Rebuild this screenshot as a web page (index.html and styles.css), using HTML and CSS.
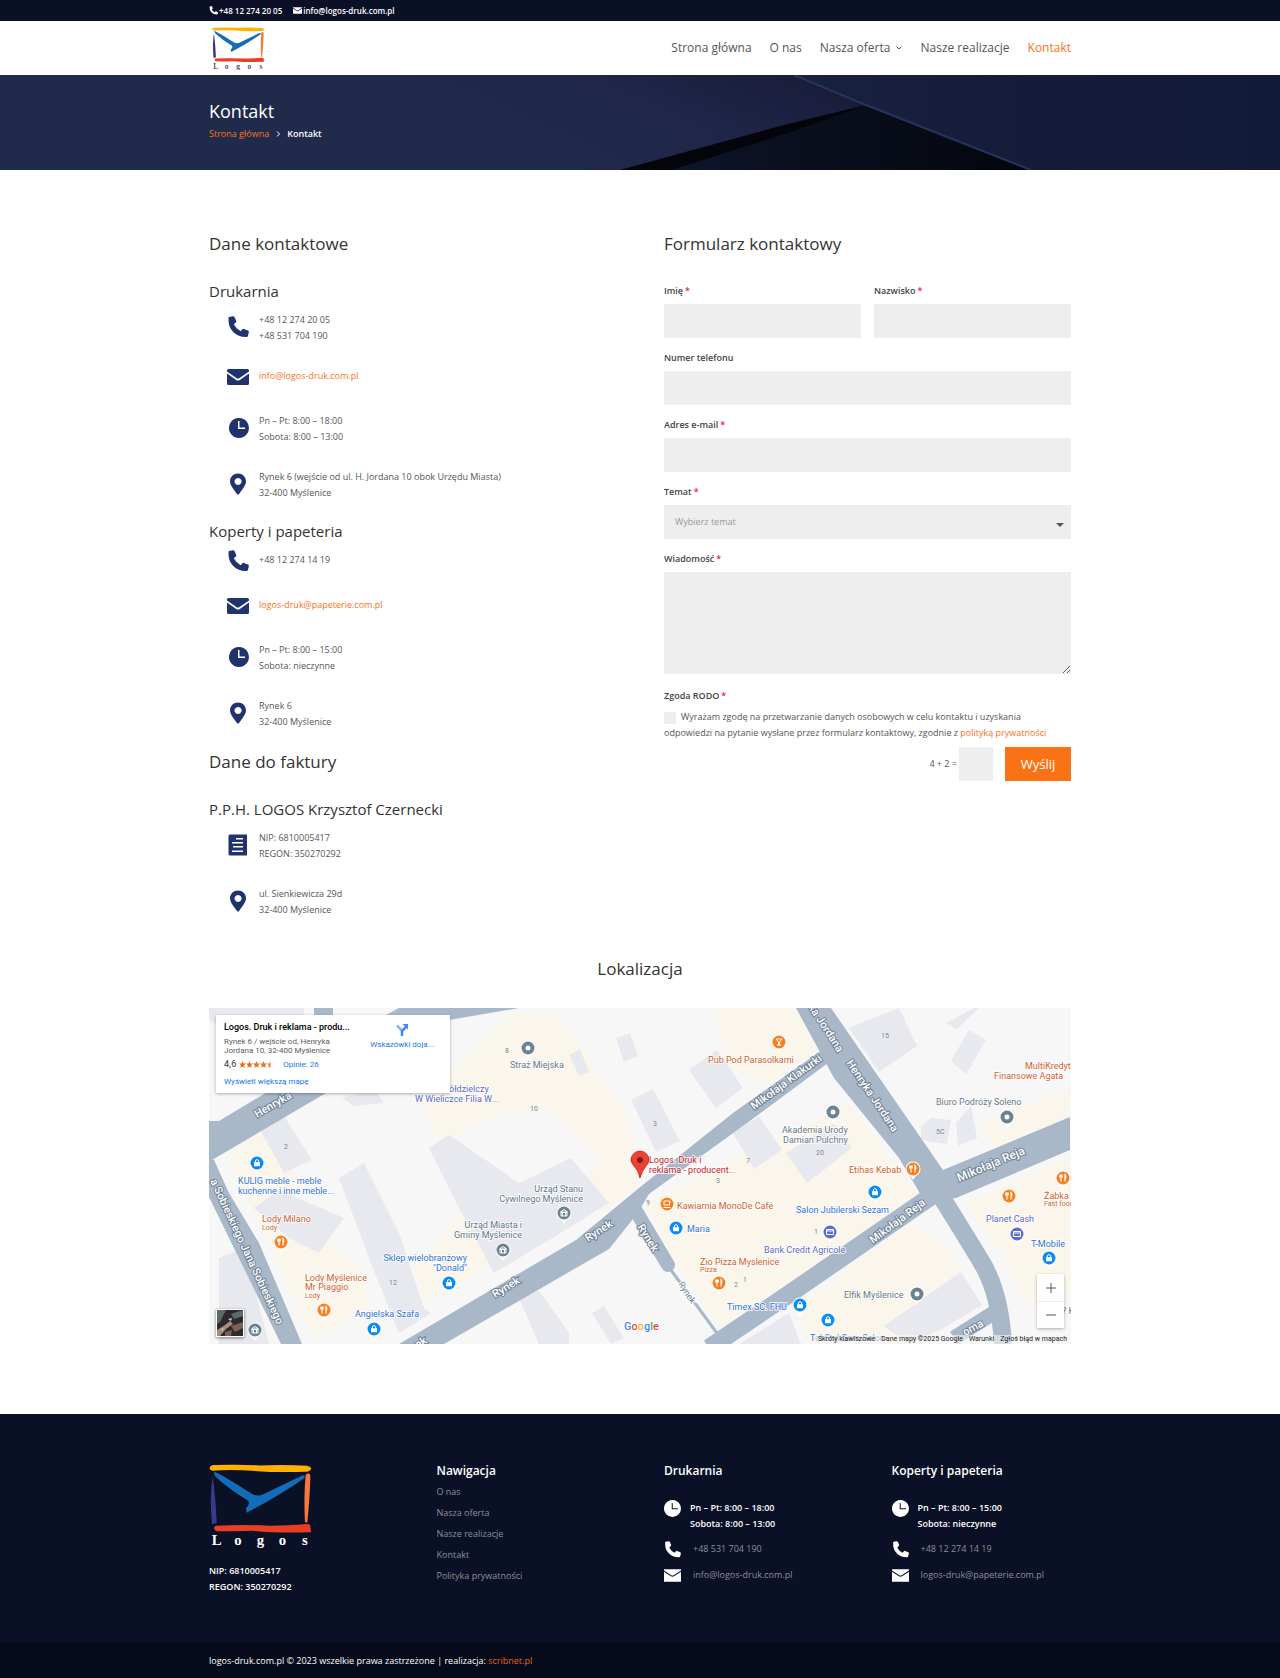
FILE: index.html
```html
<!DOCTYPE html>
<html lang="pl">
<head>
<meta charset="utf-8">
<meta name="viewport" content="width=device-width, initial-scale=1">
<title>Kontakt – Logos</title>
<link rel="stylesheet" href="styles.css">
</head>
<body>
<svg class="defs" aria-hidden="true">
  <symbol id="i-phone" viewBox="0 0 22 22"><path d="M1.500 2.200Q1 1.200 2.200 1L5.800.2Q7 0 7.500 1L9.200 5Q9.500 6 8.800 6.600L6.800 8.300Q9 12.900 13.700 15.200L15.400 13.200Q16 12.500 17 12.900L21 14.600Q22 15 21.800 16.200L21 19.800Q20.700 21 19.600 21Q11.500 21.300 6.200 16Q1 10.800 1.500 2.200Z"/></symbol>
  <symbol id="i-mail" viewBox="0 0 22 22"><path d="M1.500 3H20.500Q22 3 22 4.500V5.500L12.200 12.300Q11 13.100 9.800 12.300L0 5.500V4.500Q0 3 1.500 3ZM0 7.500L9.200 14Q11 15.200 12.800 14L22 7.500V17.500Q22 19 20.500 19H1.500Q0 19 0 17.500Z"/></symbol>
  <symbol id="i-clock" viewBox="0 0 22 22"><path fill-rule="evenodd" d="M12 1A10 10 0 1 1 11.900 1ZM11 4V12H18V10.500H12.500V4Z"/></symbol>
  <symbol id="i-clock-lg" viewBox="0 0 22 22"><path fill-rule="evenodd" d="M11 0A11 11 0 1 1 10.900 0ZM10 4V12H18V10.700H11.300V4Z"/></symbol>
  <symbol id="i-pin" viewBox="0 0 22 22"><path fill-rule="evenodd" d="M11 .5C15.500.5 19 4 19 8.500C19 12 15 17 12 21Q11 22.300 10 21C7 17 3 12 3 8.500C3 4 6.500.5 11 .5ZM11 5A3.500 3.500 0 1 0 11.100 5Z"/></symbol>
  <symbol id="i-list" viewBox="0 0 22 22"><path fill-rule="evenodd" d="M3 .5H20V21.500H3Q1.500 21.500 1.500 20V2Q1.500.5 3 .5ZM9 4V5.500H16V4ZM5 8V9.500H16V8ZM6 12V13.500H16V12ZM5 16.500V18H16V16.500Z"/></symbol>
  <symbol id="i-envelope" viewBox="0 0 22 22"><path d="M0 3H22V4.500L13 10.500Q11 11.800 9 10.500L0 4.500ZM0 6L9 12Q11 13.200 13 12L22 6V19H0Z"/></symbol>
  <symbol id="logo" viewBox="0 0 304 250">
    <path fill="#ffb000" d="M2 14Q1 4 16 3Q90 0 150 4Q230 1 292 5Q306 8 304 15Q302 22 290 23Q200 26 130 20Q60 16 10 20Q3 19 2 14Z"/>
    <path fill="#373a8f" d="M11 36Q19 90 23 176L9 180Q1 100 11 36Z"/>
    <path fill="#f6783b" d="M288 32Q296 24 302 32Q302 80 293 175L286 173Q282 100 288 32Z"/>
    <path fill="#e93e24" d="M20 184Q100 179 180 184Q240 184 290 179Q303 178 302 186L304 203Q200 206 130 199Q60 201 22 200Q9 191 20 184Z"/>
    <path fill="#136cb8" d="M14 22Q30 26 130 90Q145 97 160 91Q220 62 278 34Q288 32 284 42Q200 100 112 145L110 131Q123 120 117 109Q60 75 18 36Z"/>
    <text class="logo-word" x="8 75 142 208 277" y="242">Logos</text>
  </symbol>
  <symbol id="m-shop" viewBox="0 0 20 20"><path d="M10 19L6 13H14Z" fill="#fff"/><circle cx="10" cy="8" r="7.500" fill="#fff"/><circle cx="10" cy="8" r="6.500" fill="#0a8bf5"/><path d="M7 7.200H13V11.200H7Z" fill="#fff"/><path d="M8.400 7.500V6Q8.400 4.700 10 4.700Q11.600 4.700 11.600 6V7.500" fill="none" stroke="#fff"/></symbol>
  <symbol id="m-food" viewBox="0 0 20 20"><path d="M10 19L6 13H14Z" fill="#fff"/><circle cx="10" cy="8" r="7.500" fill="#fff"/><circle cx="10" cy="8" r="6.500" fill="#f97f1d"/><path d="M8 4.500V11.500M6.800 4.500V7H9.200V4.500M12 11.500V4.500Q13.500 6 12.500 8.500" fill="none" stroke="#fff" stroke-width="1.200"/></symbol>
  <symbol id="m-bar" viewBox="0 0 20 20"><path d="M10 19L6 13H14Z" fill="#fff"/><circle cx="10" cy="8" r="7.500" fill="#fff"/><circle cx="10" cy="8" r="6.500" fill="#f97f1d"/><path d="M7 5H13L10.500 8V11H9.500V8ZM8 11H12" fill="none" stroke="#fff"/></symbol>
  <symbol id="m-cafe" viewBox="0 0 20 20"><path d="M10 19L6 13H14Z" fill="#fff"/><circle cx="10" cy="8" r="7.500" fill="#fff"/><circle cx="10" cy="8" r="6.500" fill="#f97f1d"/><path d="M7 5H12.500V9H7ZM12.500 6H14M6.500 11.500H13.500" fill="none" stroke="#fff"/></symbol>
  <symbol id="m-civic" viewBox="0 0 20 20"><path d="M10 19L6 13H14Z" fill="#fff"/><circle cx="10" cy="8" r="7.500" fill="#fff"/><circle cx="10" cy="8" r="6.500" fill="#6b8390"/><path d="M6.500 7L10 4.500L13.500 7ZM7 7.500H13V11H7ZM8.500 8V11M11.500 8V11" fill="none" stroke="#fff"/></symbol>
  <symbol id="m-dot" viewBox="0 0 20 20"><path d="M10 19L6 13H14Z" fill="#fff"/><circle cx="10" cy="8" r="7.500" fill="#fff"/><circle cx="10" cy="8" r="6.500" fill="#6b8390"/><circle cx="10" cy="8" r="2.500" fill="#fff"/></symbol>
  <symbol id="m-bank" viewBox="0 0 20 20"><path d="M10 19L6 13H14Z" fill="#fff"/><circle cx="10" cy="8" r="7.500" fill="#fff"/><circle cx="10" cy="8" r="6.500" fill="#5b6bd0"/><path d="M6.500 5.500H13.500V10.500H6.500ZM6.500 7H13.500" fill="none" stroke="#fff"/></symbol>
</svg>

<div class="topbar">
  <div class="container topbar-row">
    <span class="topbar-item"><svg class="icon-xs"><use href="#i-phone"/></svg>+48 12 274 20 05</span>
    <a class="topbar-item" href="mailto:info@logos-druk.com.pl"><svg class="icon-xs"><use href="#i-envelope"/></svg>info@logos-druk.com.pl</a>
  </div>
</div>

<header class="header">
  <div class="container header-row">
    <a class="header-logo" href="#" aria-label="Logos"><svg><use href="#logo"/></svg></a>
    <nav class="nav">
      <a href="#">Strona główna</a>
      <a href="#">O nas</a>
      <a href="#">Nasza oferta<svg class="chevron" viewBox="0 0 6 6"><path d="M.5 1.500L3 4L5.500 1.500"/></svg></a>
      <a href="#">Nasze realizacje</a>
      <a class="active" href="#">Kontakt</a>
    </nav>
  </div>
</header>

<section class="hero">
  <svg class="hero-bg" viewBox="0 0 1280 95" preserveAspectRatio="none" aria-hidden="true">
    <defs>
      <linearGradient id="h1" gradientUnits="userSpaceOnUse" x1="560" y1="95" x2="660" y2="-125"><stop offset="0" stop-color="#202a4a"/><stop offset=".4" stop-color="#1f2648"/><stop offset=".7" stop-color="#1b1e3d"/><stop offset="1" stop-color="#131728"/></linearGradient>
      <linearGradient id="h2"><stop offset="0" stop-color="#18223f"/><stop offset=".5" stop-color="#151b38"/><stop offset="1" stop-color="#111b38"/></linearGradient>
      <linearGradient id="h3"><stop offset="0" stop-color="#101731"/><stop offset=".5" stop-color="#090e1c"/><stop offset="1" stop-color="#04060c"/></linearGradient>
    </defs>
    <path fill="url(#h1)" d="M0 0H880V95H0Z"/>
    <path fill="url(#h3)" d="M866 30L1033 95H620Z"/>
    <path fill="#03050b" d="M866 30L780 51L620 95H672L800 54Z"/>
    <path fill="url(#h2)" d="M792 0H1280V95H1033L866 30Z"/>
    <path fill="none" stroke="#26345c" stroke-width="2" d="M794 0L866 30L1031 95"/>
  </svg>
  <div class="container hero-text">
    <h1>Kontakt</h1>
    <p class="crumbs"><a href="#">Strona główna</a><svg class="crumb-sep" viewBox="0 0 6 6"><path d="M2 .5L4.500 3L2 5.500"/></svg><span>Kontakt</span></p>
  </div>
</section>

<main class="container main">
  <div class="columns">
    <section>
      <h2>Dane kontaktowe</h2>
      <h3>Drukarnia</h3>
      <ul class="contacts">
        <li><svg><use href="#i-phone"/></svg><p>+48 12 274 20 05<br>+48 531 704 190</p></li>
        <li><svg><use href="#i-mail"/></svg><p><a href="mailto:info@logos-druk.com.pl">info@logos-druk.com.pl</a></p></li>
        <li><svg><use href="#i-clock"/></svg><p>Pn – Pt: 8:00 – 18:00<br>Sobota: 8:00 – 13:00</p></li>
        <li><svg><use href="#i-pin"/></svg><p>Rynek 6 (wejście od ul. H. Jordana 10 obok Urzędu Miasta)<br>32-400 Myślenice</p></li>
      </ul>
      <h3>Koperty i papeteria</h3>
      <ul class="contacts">
        <li><svg><use href="#i-phone"/></svg><p>+48 12 274 14 19</p></li>
        <li><svg><use href="#i-mail"/></svg><p><a href="mailto:logos-druk@papeterie.com.pl">logos-druk@papeterie.com.pl</a></p></li>
        <li><svg><use href="#i-clock"/></svg><p>Pn – Pt: 8:00 – 15:00<br>Sobota: nieczynne</p></li>
        <li><svg><use href="#i-pin"/></svg><p>Rynek 6<br>32-400 Myślenice</p></li>
      </ul>
      <h2>Dane do faktury</h2>
      <h3>P.P.H. LOGOS Krzysztof Czernecki</h3>
      <ul class="contacts">
        <li><svg><use href="#i-list"/></svg><p>NIP: 6810005417<br>REGON: 350270292</p></li>
        <li><svg><use href="#i-pin"/></svg><p>ul. Sienkiewicza 29d<br>32-400 Myślenice</p></li>
      </ul>
    </section>

    <section>
      <h2>Formularz kontaktowy</h2>
      <form class="form">
        <div class="field half"><label for="f-name">Imię<span class="req">*</span></label><input id="f-name" type="text"></div>
        <div class="field half"><label for="f-surname">Nazwisko<span class="req">*</span></label><input id="f-surname" type="text"></div>
        <div class="field"><label for="f-phone">Numer telefonu</label><input id="f-phone" type="tel"></div>
        <div class="field"><label for="f-mail">Adres e-mail<span class="req">*</span></label><input id="f-mail" type="email"></div>
        <div class="field"><label for="f-topic">Temat<span class="req">*</span></label>
          <div class="select"><select id="f-topic"><option>Wybierz temat</option></select></div></div>
        <div class="field"><label for="f-msg">Wiadomość<span class="req">*</span></label><textarea id="f-msg"></textarea></div>
        <div class="field consent">
          <span class="label">Zgoda RODO<span class="req">*</span></span>
          <label class="consent-text" for="f-rodo"><input id="f-rodo" type="checkbox">Wyrażam zgodę na przetwarzanie danych osobowych w celu kontaktu i uzyskania odpowiedzi na pytanie wysłane przez formularz kontaktowy, zgodnie z <a href="#">polityką prywatności</a></label>
        </div>
        <div class="field submit">
          <label for="f-sum">4 + 2 =</label><input id="f-sum" type="text">
          <button type="submit">Wyślij</button>
        </div>
      </form>
    </section>
  </div>

  <section class="location">
    <h2>Lokalizacja</h2>
    <div class="map">
      <svg class="map-canvas" viewBox="0 0 862 336" preserveAspectRatio="xMidYMid slice">
        <g fill="#faf6eb">
          <path d="M305 5L350 5L420 110L430 180L390 205L370 180L390 150L340 100L280 110L230 135L210 85L250 60Z"/>
          <path d="M20 152L50 120L90 170L60 220L120 235L150 260L160 300L105 330L85 290Z"/>
          <path d="M205 262L250 205L280 215L290 250L235 285L215 296Z"/>
          <path d="M505 0H590L610 40L560 75L520 60Z"/>
          <path d="M436 195L640 95L712 190L690 205L512 318L470 262Z"/>
          <path d="M590 300L700 215L740 240L770 300L700 336H600Z"/>
          <path d="M770 115L861 80V118L790 145Z"/>
          <path d="M755 195L861 150V280L820 300L790 240Z"/>
        </g>
        <g fill="#e8e9ee">
          <path d="M0 0H95V8L30 30L0 12Z"/>
          <path d="M50 120L75 108L103 152L75 165Z"/>
          <path d="M45 200L70 182L135 210L110 245L80 230Z"/>
          <path d="M10 250L35 240L60 336H10Z"/>
          <path d="M130 170L155 155L190 225L215 300L222 305L190 325L160 250Z"/>
          <path d="M220 140L240 127L310 175L362 150L400 195L322 243L285 265L250 200Z"/>
          <path d="M133 90L165 80L175 95L145 98Z"/>
          <path d="M310 290L330 283L360 325V336H330Z"/>
          <path d="M383 305L395 298L415 330L402 336Z"/>
          <path d="M360 47L371 41L380 64L370 68Z"/>
          <path d="M407 30L421 25L429 48L415 54Z"/>
          <path d="M422 92L444 81L471 133L447 144Z"/>
          <path d="M480 62L508 42L534 80L507 100Z"/>
          <path d="M524 125L550 108L573 142L545 161Z"/>
          <path d="M577 145L625 115L643 140L598 175Z"/>
          <path d="M640 20L690 0L708 38L670 64Z"/>
          <path d="M737 15L765 0H770L748 21Z"/>
          <path d="M742 53L760 22L777 32L757 66Z"/>
          <path d="M712 118L722 110L742 112L738 136L712 132Z"/>
          <path d="M747 115L762 98L768 130L749 138Z"/>
          <path d="M675 318L752 264L773 297L735 320L700 336Z"/>
          <path d="M530 336L580 305L592 336Z"/>
        </g>
        <g fill="#a9b8c9">
          <path d="M0 113H10L75 74L177 7L190 0H310L240 12Q180 40 117 85L3 152H0Z"/>
          <path d="M105 0H124V12H105Z"/>
          <path d="M0 189V150L5 152L20 185L50 235L93 336H72Z"/>
          <path d="M190 336L367 232L430 180L524 105L613 42L623 52L538 115L440 186L428 206L400 241L235 336Z"/>
          <path d="M587 0H622L734 162L861 109V142L747 190L716 194L690 150L625 70Z"/>
        </g>
        <g fill="none" stroke="#a9b8c9">
          <path stroke-width="14" stroke-linecap="round" d="M424 198L459 257"/>
          <path stroke-width="3" d="M462 262L510 328"/>
          <path stroke-width="18" d="M728 182Q755 225 773 255T794 336"/>
          <path stroke-width="18" d="M724 187L583 284L500 340"/>
          <path stroke-width="15" d="M745 330L786 304"/>
        </g>
        <g class="street">
          <text transform="translate(48 110) rotate(-30)">Henryka</text>
          <text transform="translate(1 173) rotate(65)">a Sobieskiego Jana Sobieskiego</text>
          <text transform="translate(286 290) rotate(-31)">Rynek</text>
          <text transform="translate(379 234) rotate(-33)">Rynek</text>
          <text transform="translate(193 350) rotate(-31)">Rynek</text>
          <text transform="translate(428 219) rotate(58)">Rynek</text>
          <text transform="translate(545 102) rotate(-36)">Mikołaja Klakurki</text>
          <text transform="translate(599 -1) rotate(57)">ka Jordana</text>
          <text transform="translate(637 55) rotate(56)">Henryka Jordana</text>
          <text class="street-lg" transform="translate(750 174) rotate(-23)">Mikołaja Reja</text>
          <text transform="translate(664 236) rotate(-37)">Mikołaja Reja</text>
          <text class="street-thin" transform="translate(469 276) rotate(57)">Rynek</text>
          <text transform="translate(756 328) rotate(-28)">oma</text>
        </g>
        <g class="number">
          <text x="75" y="141">2</text><text x="321" y="103">10</text><text x="296" y="45">8</text><text x="180" y="277">12</text>
          <text x="444" y="118">3</text><text x="537" y="155">7</text><text x="507" y="175">3</text><text x="607" y="147">20</text>
          <text x="672" y="30">15</text><text x="727" y="126">5C</text><text x="525" y="279">2</text><text x="534" y="274">1</text><text x="605" y="226">1</text><text x="437" y="197">9</text>
        </g>
        <g>
          <use href="#m-dot" x="309" y="32" width="20" height="20"/>
          <use href="#m-shop" x="38" y="147" width="20" height="20"/>
          <use href="#m-food" x="62" y="226" width="20" height="20"/>
          <use href="#m-food" x="105" y="294" width="20" height="20"/>
          <use href="#m-shop" x="155" y="313" width="20" height="20"/>
          <use href="#m-shop" x="230" y="267" width="20" height="20"/>
          <use href="#m-civic" x="284" y="234" width="20" height="20"/>
          <use href="#m-civic" x="345" y="197" width="20" height="20"/>
          <use href="#m-civic" x="36" y="314" width="20" height="20"/>
          <use href="#m-bar" x="560" y="26" width="20" height="20"/>
          <use href="#m-dot" x="614" y="96" width="20" height="20"/>
          <use href="#m-food" x="694" y="153" width="20" height="20"/>
          <use href="#m-shop" x="656" y="176" width="20" height="20"/>
          <use href="#m-cafe" x="448" y="188" width="20" height="20"/>
          <use href="#m-shop" x="457" y="212" width="20" height="20"/>
          <use href="#m-bank" x="611" y="216" width="20" height="20"/>
          <use href="#m-food" x="500" y="267" width="20" height="20"/>
          <use href="#m-shop" x="581" y="289" width="20" height="20"/>
          <use href="#m-shop" x="609" y="304" width="20" height="20"/>
          <use href="#m-dot" x="698" y="278" width="20" height="20"/>
          <use href="#m-dot" x="788" y="101" width="20" height="20"/>
          <use href="#m-food" x="790" y="180" width="20" height="20"/>
          <use href="#m-food" x="844" y="162" width="20" height="20"/>
          <use href="#m-bank" x="798" y="218" width="20" height="20"/>
          <use href="#m-shop" x="830" y="242" width="20" height="20"/>
        </g>
        <g class="place">
          <g class="gray">
            <text x="301" y="60">Straż Miejska</text>
            <text x="374" y="184" class="end">Urząd Stanu</text><text x="374" y="194" class="end">Cywilnego Myślenice</text>
            <text x="313" y="220" class="end">Urząd Miasta i</text><text x="313" y="230" class="end">Gminy Myślenice</text>
            <text x="573" y="125">Akademia Urody</text><text x="574" y="135">Damian Pulchny</text>
            <text x="727" y="97">Biuro Podróży Soleno</text>
            <text x="635" y="290">Elfik Myślenice</text>
            <text x="853" y="306">? K</text>
          </g>
          <g class="violet">
            <text x="240" y="84">ółdzielczy</text><text x="206" y="94">W Wieliczce Filia W...</text>
            <text x="555" y="245">Bank Credit Agricole</text>
            <text x="777" y="214">Planet Cash</text>
          </g>
          <g class="blue">
            <text x="29" y="176">KULIG meble - meble</text><text x="29" y="186">kuchenne i inne meble...</text>
            <text x="258" y="253" class="end">Sklep wielobranżowy</text><text x="258" y="263" class="end">"Donald"</text>
            <text x="146" y="309">Angielska Szafa</text>
            <text x="587" y="205">Salon Jubilerski Sezam</text>
            <text x="478" y="224">Maria</text>
            <text x="518" y="302">Timex SC. FHU</text>
            <text x="601" y="333">Tel-Styl Gsm Salon</text>
            <text x="822" y="239">T-Mobile</text>
          </g>
          <g class="orange">
            <text x="53" y="214">Lody Milano</text><text x="53" y="222" class="small">Lody</text>
            <text x="96" y="273">Lody Myślenice</text><text x="96" y="282">Mr Piaggio</text><text x="96" y="290" class="small">Lody</text>
            <text x="499" y="55">Pub Pod Parasolkami</text>
            <text x="640" y="165">Etihas Kebab</text>
            <text x="468" y="201">Kawiarnia MonoDe Café</text>
            <text x="491" y="257">Zio Pizza Myslenice</text><text x="491" y="264" class="small">Pizza</text>
            <text x="816" y="61">MultiKredyt</text><text x="785" y="71">Finansowe Agata</text>
            <text x="835" y="191">Żabka</text><text x="835" y="198" class="small">Fast food</text>
          </g>
          <g class="red">
            <text x="440" y="155">Logos. Druk i</text><text x="440" y="165">reklama - producent...</text>
          </g>
        </g>
        <path fill="#ea4335" stroke="#b31412" stroke-width=".7" d="M431 170Q429 162 425 158Q422 154 422 152A9 9 0 0 1 440 152Q440 155 437 158Q433 163 431 170Z"/>
        <circle cx="431" cy="152" r="3" fill="#8b1410"/>
        <text class="google" x="415" y="322"><tspan fill="#4285f4">G</tspan><tspan fill="#ea4335">o</tspan><tspan fill="#fbbc04">o</tspan><tspan fill="#4285f4">g</tspan><tspan fill="#34a853">l</tspan><tspan fill="#ea4335">e</tspan></text>
      </svg>
      <div class="map-card">
        <div class="map-card-info">
          <strong>Logos. Druk i reklama - produ...</strong>
          <span>Rynek 6 / wejście od, Henryka<br>Jordana 10, 32-400 Myślenice</span>
          <span class="rating"><b>4,6</b><svg class="stars" viewBox="0 0 35 7"><defs><path id="star" d="M3.500 0L4.500 2.400L7 2.600L5.100 4.300L5.700 6.800L3.500 5.400L1.300 6.800L1.900 4.300L0 2.600L2.500 2.400Z"/></defs><use href="#star"/><use href="#star" x="7"/><use href="#star" x="14"/><use href="#star" x="21"/><path d="M31.500 0V5.400L29.300 6.800L29.900 4.300L28 2.600L30.500 2.400Z"/></svg><a href="#">Opinie: 26</a></span>
          <a href="#">Wyświetl większą mapę</a>
        </div>
        <a class="directions" href="#"><svg viewBox="0 0 12 12"><path fill="none" stroke="#8ab4f8" stroke-width="2.500" d="M1 1.500L6 6.500"/><path fill="none" stroke="#4285f4" stroke-width="2.500" d="M6 12V7L10 3"/><path fill="#4285f4" d="M6.500 0H12V5.500Z"/></svg>Wskazówki doja...</a>
      </div>
      <button class="map-thumb" type="button" aria-label="Zdjęcia satelitarne"><svg viewBox="0 0 26 26"><path fill="#2c2a2b" d="M0 0H26V26H0Z"/><path fill="#5d6b66" d="M0 0H9L3 12L0 14ZM14 4L26 0V6L17 9Z"/><path fill="#a58c80" d="M0 20L8 15L13 11L16 14L9 19L3 26H0Z"/><path fill="#7c5f55" d="M14 16L26 12V18L18 22ZM8 22L15 20L14 26H8Z"/><path fill="#d0c8c2" d="M11 9L15 8L14 11ZM4 19L7 18L5 21Z"/></svg></button>
      <div class="map-zoom"><button type="button" aria-label="Powiększ"><svg viewBox="0 0 12 12"><path d="M6 1V11M1 6H11"/></svg></button><button type="button" aria-label="Pomniejsz"><svg viewBox="0 0 12 12"><path d="M1 6H11"/></svg></button></div>
      <div class="map-legal"><a href="#">Skróty klawiszowe</a><span>Dane mapy ©2025 Google</span><a href="#">Warunki</a><a href="#">Zgłoś błąd w mapach</a></div>
    </div>
  </section>
</main>

<footer class="footer">
  <div class="container footer-cols">
    <div class="footer-brand">
      <svg class="footer-logo"><use href="#logo"/></svg>
      <p>NIP: 6810005417<br>REGON: 350270292</p>
    </div>
    <nav>
      <h4>Nawigacja</h4>
      <ul class="footer-nav">
        <li><a href="#">O nas</a></li>
        <li><a href="#">Nasza oferta</a></li>
        <li><a href="#">Nasze realizacje</a></li>
        <li><a href="#">Kontakt</a></li>
        <li><a href="#">Polityka prywatności</a></li>
      </ul>
    </nav>
    <div>
      <h4>Drukarnia</h4>
      <ul class="footer-contacts">
        <li><svg><use href="#i-clock-lg"/></svg><p>Pn – Pt: 8:00 – 18:00<br>Sobota: 8:00 – 13:00</p></li>
        <li><svg><use href="#i-phone"/></svg><a href="tel:+48531704190">+48 531 704 190</a></li>
        <li><svg><use href="#i-envelope"/></svg><a href="mailto:info@logos-druk.com.pl">info@logos-druk.com.pl</a></li>
      </ul>
    </div>
    <div>
      <h4>Koperty i papeteria</h4>
      <ul class="footer-contacts">
        <li><svg><use href="#i-clock-lg"/></svg><p>Pn – Pt: 8:00 – 15:00<br>Sobota: nieczynne</p></li>
        <li><svg><use href="#i-phone"/></svg><a href="tel:+48122741419">+48 12 274 14 19</a></li>
        <li><svg><use href="#i-envelope"/></svg><a href="mailto:logos-druk@papeterie.com.pl">logos-druk@papeterie.com.pl</a></li>
      </ul>
    </div>
  </div>
  <div class="footer-bottom"><p class="container">logos-druk.com.pl © 2023 wszelkie prawa zastrzeżone | realizacja: <a href="#">scribnet.pl</a></p></div>
</footer>
</body>
</html>
```
FILE: styles.css
```css
* { box-sizing: border-box; margin: 0; padding: 0; }
body { font: 9px/16px "Open Sans", sans-serif; color: #555; background: #fff; }
a { color: #f97316; text-decoration: none; }
ul { list-style: none; }
svg { display: block; fill: currentColor; flex: none; }
.defs { position: absolute; width: 0; height: 0; }
.container { width: calc(100% - 40px); max-width: 862px; margin: 0 auto; }

h1 { font-size: 18px; line-height: 24px; font-weight: 400; color: #fff; }
h2 { font-size: 17px; line-height: 24px; font-weight: 400; color: #333; margin-bottom: 25px; }
h3 { font-size: 15px; line-height: 20px; font-weight: 400; color: #333; margin-bottom: 11px; }
h4 { font-size: 12px; line-height: 16px; font-weight: 600; color: #fff; }

/* Top bar and header */
.topbar { background: #0a1026; color: #fff; }
.topbar-row { display: flex; gap: 11px; height: 21px; align-items: center; font-size: 8px; font-weight: 600; }
.topbar-item { display: flex; align-items: center; gap: 1px; color: #fff; }
.icon-xs { width: 9px; height: 9px; }
.header { background: #fff; }
.header-row { display: flex; align-items: center; justify-content: space-between; height: 54px; }
.header-logo { color: #556; padding-left: 3px; }
.header-logo svg { width: 52px; height: 43px; }
.logo-word { font: bold 44px "Liberation Serif", serif; fill: currentColor; }
.nav { display: flex; flex-wrap: wrap; gap: 18px; font-size: 12px; }
.nav a { display: flex; align-items: center; color: #555; }
.nav a.active { color: #f97316; }
.chevron, .crumb-sep { width: 6px; height: 6px; fill: none; stroke: currentColor; }
.chevron { margin-left: 6px; }

/* Page banner */
.hero { position: relative; background: #1f2a4b; }
.hero-bg { position: absolute; inset: 0; width: 100%; height: 100%; }
.hero-text { position: relative; padding: 24px 0 28px; }
.crumbs { display: flex; align-items: center; gap: 6px; margin-top: 3px; color: #fff; font-weight: 600; }
.crumbs a { font-weight: 400; }

/* Contact details and form */
.main { padding: 62px 0 70px; }
.columns { display: grid; grid-template-columns: repeat(auto-fit, minmax(320px, 1fr)); gap: 48px; }
.contacts { display: grid; gap: 24px; padding-left: 18px; margin-bottom: 20px; }
.contacts li { display: grid; grid-template-columns: 22px 1fr; column-gap: 10px; align-items: center; min-height: 21px; }
.contacts svg { width: 22px; height: 22px; color: #20336e; margin-top: -3px; }
.contacts p { align-self: start; }

.form { display: grid; grid-template-columns: 1fr 1fr; gap: 12px 13px; padding-top: 2px; }
.field { grid-column: 1 / -1; display: grid; gap: 5px; }
.half { grid-column: auto; }
.field > label, .label { font-weight: 600; color: #444; }
.req { color: #f5103c; margin-left: 2px; }
input, select, textarea { font: inherit; color: #999; background: #eee; border: 0; border-radius: 0; width: 100%; height: 34px; padding: 0 11px; appearance: none; display: block; }
textarea { height: 102px; padding: 11px; resize: vertical; }
.select { position: relative; }
.select::after { content: ""; position: absolute; right: 7px; top: 18px; border: 4px solid transparent; border-top-color: #555; border-bottom: 0; }
.consent { padding-top: 2px; }
.field > .consent-text, .submit > label { font-weight: 400; color: #555; }
.consent input { display: inline-block; width: 12px; height: 12px; padding: 0; vertical-align: middle; margin-right: 5px; }
.field.submit { display: flex; justify-content: flex-end; align-items: center; gap: 2px; margin-top: -6px; }
.submit input { width: 34px; }
.submit button { margin-left: 10px; width: 66px; height: 34px; border: 0; background: #f97316; color: #fff; font: 500 13px "Open Sans", sans-serif; }

/* Map */
.location { margin-top: 19px; }
.location h2 { text-align: center; margin-bottom: 27px; }
.map { position: relative; height: 336px; overflow: hidden; background: #f7f7f7; font-family: Roboto, sans-serif; }
.map-canvas { width: 100%; height: 100%; }
.street { font-size: 11px; font-weight: 500; fill: #fff; stroke: #6f8196; stroke-width: 2; paint-order: stroke; }
.street-lg { font-size: 12px; }
.street-thin { font-size: 9px; font-weight: 400; fill: #6c7b8c; stroke: #fff; }
.number { font-size: 7px; fill: #7d868f; }
.place { font-size: 9px; stroke: #fff; stroke-width: 2; stroke-opacity: 0.8; paint-order: stroke; }
.place .small { font-size: 7px; }
.end { text-anchor: end; }
.gray { fill: #667985; }
.violet { fill: #5c6bc9; }
.blue { fill: #3572e0; }
.orange { fill: #d2602f; }
.red { fill: #c5221f; }
.google { font-size: 11px; font-weight: 500; stroke: #fff; stroke-width: 2; paint-order: stroke; }
.map-card { position: absolute; left: 7px; top: 7px; width: 234px; display: flex; justify-content: space-between; padding: 7px 16px 7px 8px; background: #fff; box-shadow: 0 1px 3px rgba(0, 0, 0, 0.3); font-size: 8px; line-height: 9px; color: #5b5b5b; }
.map-card-info { display: grid; gap: 5px; white-space: nowrap; }
.map-card strong { font-size: 9px; line-height: 10px; font-weight: 500; color: #000; }
.map-card a { color: #1a73e8; }
.rating { display: flex; align-items: center; gap: 3px; }
.rating b { font-size: 9px; font-weight: 500; }
.rating a { margin-left: 6px; }
.stars { width: 35px; height: 7px; fill: #e7711b; }
.map-card-info > a { margin-top: 3px; }
.directions { display: grid; justify-items: center; align-content: start; gap: 4px; padding-top: 2px; white-space: nowrap; }
.directions svg { width: 12px; height: 12px; }
.map-thumb { position: absolute; left: 7px; bottom: 7px; width: 28px; height: 28px; border: 1px solid #fff; background: none; box-shadow: 0 1px 3px rgba(0, 0, 0, 0.5); }
.map-zoom { position: absolute; right: 7px; bottom: 16px; width: 27px; background: #fff; box-shadow: 0 1px 3px rgba(0, 0, 0, 0.3); }
.map-zoom button { display: grid; place-items: center; width: 27px; height: 27px; border: 0; background: none; }
.map-zoom button + button { border-top: 1px solid #eee; }
.map-zoom svg { width: 12px; height: 12px; stroke: #555; }
.map-legal { position: absolute; right: 0; bottom: 0; display: flex; gap: 6px; padding: 0 4px; background: rgba(245, 245, 245, 0.6); font-size: 7px; line-height: 9px; color: #222; }
.map-legal a { color: #222; }

/* Footer */
.footer { background: #0a1026; color: #fff; font-weight: 600; }
.footer-cols { display: grid; grid-template-columns: repeat(auto-fit, minmax(170px, 1fr)); gap: 48px; padding: 49px 0 48px; }
.footer-logo { width: 102px; height: 84px; margin: 1px 0 15px; }
.footer-nav { display: grid; gap: 5px; margin-top: 5px; }
.footer a { color: #8c8f98; font-weight: 400; }
.footer-contacts { display: grid; gap: 9px; margin-top: 21px; }
.footer-contacts li { display: grid; grid-template-columns: 17px 1fr; column-gap: 9px; }
.footer-contacts svg { width: 17px; height: 17px; }
.footer-contacts a { padding-left: 3px; }
.footer-bottom { background: #060a1a; padding: 10px 0; font-weight: 400; }
.footer .footer-bottom a { color: #e8641a; }
```
